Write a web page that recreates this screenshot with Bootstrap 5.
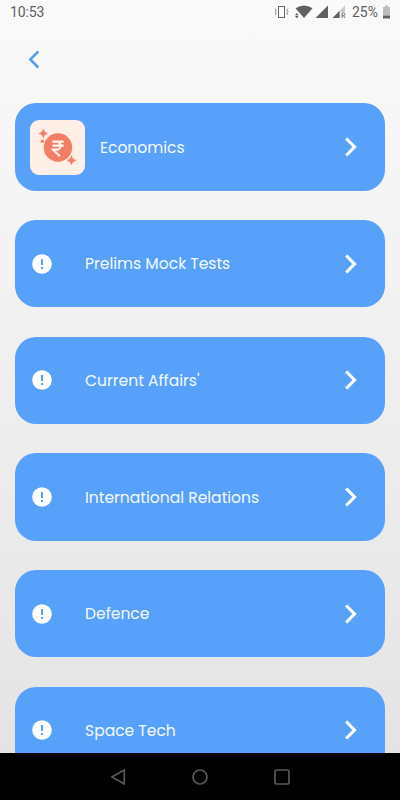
<!DOCTYPE html>
<html lang="en">
<head>
<meta charset="utf-8">
<meta name="viewport" content="width=device-width, initial-scale=1">
<title>Subjects</title>
<link href="https://cdn.jsdelivr.net/npm/bootstrap@5.3.0/dist/css/bootstrap.min.css" rel="stylesheet">
<style>
body { font-family: Poppins, Inter, sans-serif; background: #000; }
svg { display: block; flex: none; }
.screen { height: 800px; }
.app-view { background: linear-gradient(#fafafa, #e4e4e4); min-height: 0; }
.status-bar { height: 24px; padding: 0 9px 0 10px; font: 14px/24px Roboto, sans-serif; color: #606060; }
.clock { letter-spacing: -.1px; }
.battery-text { margin: 0 4px 0 6px; }
.app-header { height: 79.4px; padding: 26px 28px 0; }
.subjects { gap: 29.4px; padding: 0 15px; min-height: 0; }
.subject { height: 87.3px; flex: none; border-radius: 21px; background: #58a1fb; color: #f4faff; padding: 0 27px 0 15px; font-size: 15.55px; line-height: 24px; }
.subject > span { padding-top: 1px; }
.thumb { width: 55px; height: 55px; border-radius: 9px; background: #ffefe6; margin-right: 15px; }
.alert-slot { width: 55px; padding-left: 2px; }
.system-nav { height: 47px; flex: none; background: #000; gap: 66px; }
</style>
</head>
<body>
<svg class="d-none" aria-hidden="true">
  <symbol id="next" viewBox="0 0 14 20"><path d="M2.200 1.500 10.500 10 2.200 18.500" fill="none" stroke="#fff" stroke-width="3.2"/></symbol>
  <symbol id="alert" viewBox="0 0 20 20"><circle cx="10" cy="10" r="9.8" fill="#fff"/><path d="M10 5v6M10 13v2" stroke="#58a1fb" stroke-width="2"/></symbol>
</svg>
<div class="screen d-flex flex-column overflow-hidden">
  <div class="app-view d-flex flex-column flex-grow-1 overflow-hidden">
    <div class="status-bar d-flex align-items-center flex-shrink-0">
      <span class="clock me-auto">10:53</span>
      <svg width="72" height="16" viewBox="274 4 72 16">
        <rect x="278.5" y="6.5" width="6" height="11" fill="none" stroke="#666"/>
        <path d="M275 8.5l1.3 1.5-1.3 1.7 1.3 1.7-1.3 1.6M288 8.5l-1.3 1.5 1.3 1.7-1.3 1.7 1.3 1.6" fill="none" stroke="#777" stroke-width=".9"/>
        <path d="M295.5 8.3q8.5-5.4 17 0L304 18z" fill="#606060"/>
        <path d="M295 15.2l1.8-2.2 1.8 2.2zM295 16l1.8 2.2 1.8-2.2z" fill="#555"/>
        <path d="M315.500 18 328 5.500V18z" fill="#606060"/>
        <path d="M332.500 18 345 5.500V12h-5v6z" fill="#c9c9c9"/>
        <path d="M332.500 18 339.500 11v7z" fill="#606060"/>
        <path d="M342 18v-5h1.500q1.500 0 1.500 1.300t-1.500 1.300H342M343.500 15.600l1.500 2.400" fill="none" stroke="#666" stroke-width=".9"/>
      </svg>
      <span class="battery-text">25%</span>
      <svg width="9" height="14" viewBox="0 0 9 14"><path d="M1 2h2V.5h3V2h2v8.500H1z" fill="#bdbdbd"/><path d="M1 10.500h7V13.500H1z" fill="#606060"/></svg>
    </div>
    <header class="app-header flex-shrink-0">
      <svg width="12" height="19" viewBox="0 0 12 19"><path d="M10.300 1.500 2.300 9.500l8 8" fill="none" stroke="#559de9" stroke-width="2.500"/></svg>
    </header>
    <main class="subjects d-flex flex-column flex-grow-1 overflow-hidden">
      <div class="subject d-flex align-items-center">
        <div class="thumb d-flex flex-shrink-0">
          <svg width="55" height="55" viewBox="0 0 55 55">
            <circle cx="28" cy="27.500" r="14.200" fill="#f47d66"/>
            <path d="M13.300 8.800q.8 3.800 4.400 4.700-3.600.8-4.400 4.700-.8-3.900-4.400-4.700 3.600-.9 4.400-4.700zM41.500 35.500q.8 3.900 4.600 4.800-3.800.9-4.600 4.800-.8-3.900-4.600-4.800 3.800-.9 4.600-4.800z" fill="#f47d66" stroke="#f47d66" stroke-width=".4"/>
            <circle cx="12.300" cy="21.200" r="1.700" fill="#f47d66"/>
            <path d="M22.500 21.700h11.200M22.500 25.700h11.200M23 21.700h3.200q4.200 0 4.200 4t-4.200 4H23l7 6.600" fill="none" stroke="#fff3eb" stroke-width="2.200"/>
          </svg>
        </div>
        <span class="me-auto">Economics</span><svg width="14" height="20"><use href="#next"/></svg>
      </div>
      <div class="subject d-flex align-items-center">
        <div class="alert-slot"><svg width="20" height="20"><use href="#alert"/></svg></div>
        <span class="me-auto">Prelims Mock Tests</span><svg width="14" height="20"><use href="#next"/></svg>
      </div>
      <div class="subject d-flex align-items-center">
        <div class="alert-slot"><svg width="20" height="20"><use href="#alert"/></svg></div>
        <span class="me-auto">Current Affairs'</span><svg width="14" height="20"><use href="#next"/></svg>
      </div>
      <div class="subject d-flex align-items-center">
        <div class="alert-slot"><svg width="20" height="20"><use href="#alert"/></svg></div>
        <span class="me-auto">International Relations</span><svg width="14" height="20"><use href="#next"/></svg>
      </div>
      <div class="subject d-flex align-items-center">
        <div class="alert-slot"><svg width="20" height="20"><use href="#alert"/></svg></div>
        <span class="me-auto">Defence</span><svg width="14" height="20"><use href="#next"/></svg>
      </div>
      <div class="subject d-flex align-items-center">
        <div class="alert-slot"><svg width="20" height="20"><use href="#alert"/></svg></div>
        <span class="me-auto">Space Tech</span><svg width="14" height="20"><use href="#next"/></svg>
      </div>
    </main>
  </div>
  <nav class="system-nav d-flex justify-content-center align-items-center">
    <svg width="16" height="16" viewBox="0 0 16 16"><path d="M14.300 1v14L1.800 8z" fill="none" stroke="#585858" stroke-width="1.700" stroke-linejoin="round"/></svg>
    <svg width="16" height="16" viewBox="0 0 16 16"><circle cx="8" cy="8" r="7" fill="none" stroke="#585858" stroke-width="1.700"/></svg>
    <svg width="16" height="16" viewBox="0 0 16 16"><rect x="1" y="1" width="14" height="14" rx="2" fill="none" stroke="#585858" stroke-width="1.700"/></svg>
  </nav>
</div>
<script src="https://cdn.jsdelivr.net/npm/bootstrap@5.3.0/dist/js/bootstrap.bundle.min.js"></script>
</body>
</html>
